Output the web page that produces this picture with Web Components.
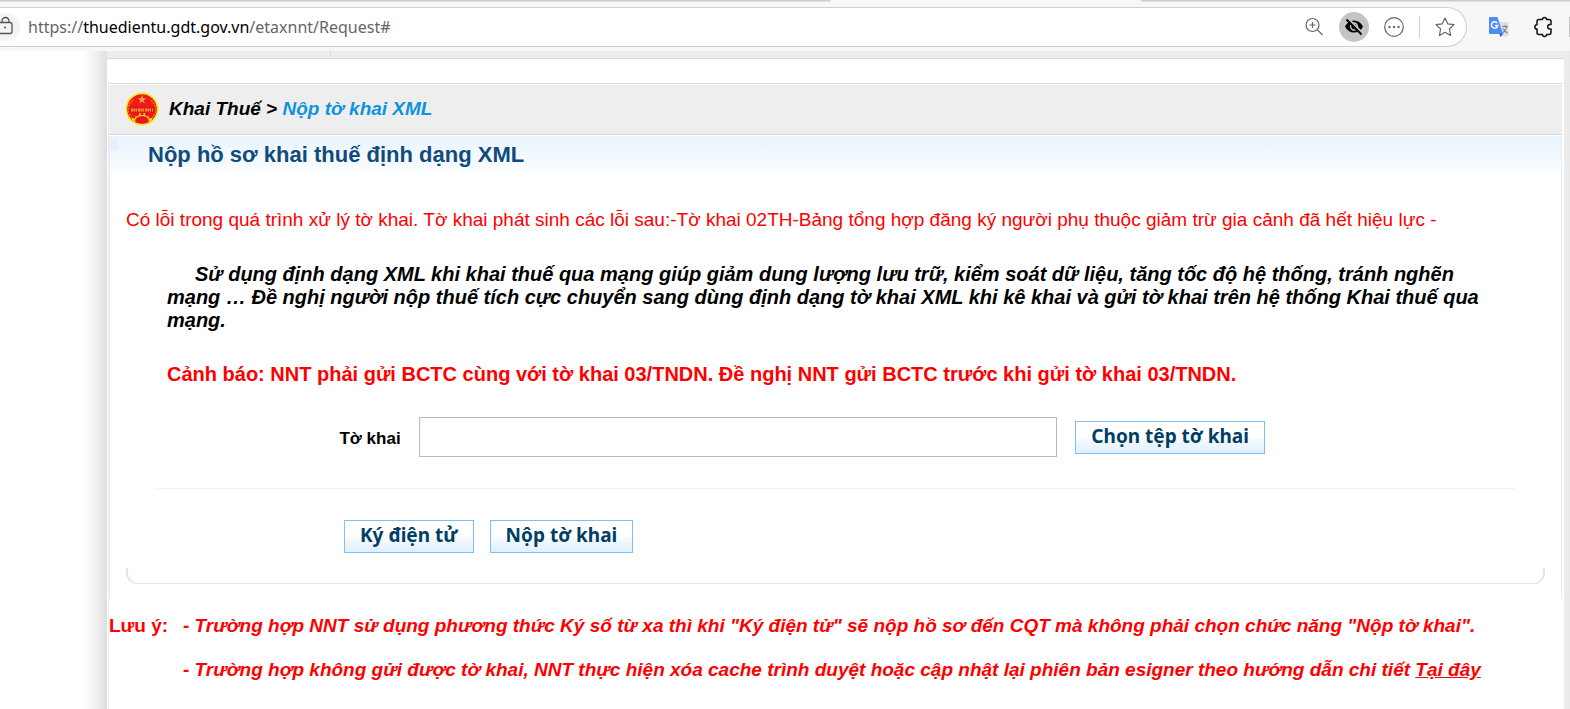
<!DOCTYPE html>
<html lang="vi">
<head>
<meta charset="utf-8">
<meta name="viewport" content="width=device-width, initial-scale=1">
<title>Nộp tờ khai XML</title>
<style>
  body {
    margin: 0;
    background: #fff;
    font-family: "Liberation Sans", Arial, sans-serif;
    color: #000;
  }
</style>
</head>
<body>
<etax-app></etax-app>

<script>
// Address bar
const toolbarTemplate = document.createElement('template');
toolbarTemplate.innerHTML = `
  <style>
    :host {
      display: flex;
      flex-direction: column;
      height: 51px;
      background: #f7f7f7;
      overflow: hidden;
    }

    .tabs {
      display: grid;
      grid-template-columns: 831fr 310fr 429fr;
      height: 7px;
    }

    .tabs i {
      height: 1px;
      background: #cbcbcb;
      border-bottom: 1px solid #e2e2e2;
    }

    .tabs i:first-child {
      border-bottom-right-radius: 4px;
    }

    .tabs i:last-child {
      grid-column: 3;
      border-bottom-left-radius: 4px;
    }

    .row {
      display: flex;
      align-items: center;
    }

    .bar {
      flex: 1;
      display: flex;
      align-items: center;
      box-sizing: border-box;
      height: 40px;
      padding-right: 1px;
      background: #fff;
      border: 1px solid #cfcfcf;
      border-left: 0;
      border-radius: 0 20px 20px 0;
    }

    .bar svg {
      flex: none;
    }

    .address {
      flex: 1;
      margin-left: 8px;
      font: 16px/26px "Noto Sans", "Open Sans", sans-serif;
      color: #666;
      text-decoration: none;
    }

    .address b {
      font-weight: normal;
      color: #000;
    }

    button {
      display: grid;
      place-items: center;
      width: 30px;
      height: 30px;
      margin: 0 5px;
      padding: 0;
      border: 0;
      border-radius: 50%;
      background: none;
    }

    button.on {
      background: #c4c4c4;
    }

    .divider {
      width: 1px;
      height: 22px;
      margin: 0 5px;
      background: #d0d0d0;
    }

    .extensions {
      display: flex;
      align-items: center;
      gap: 5px;
      margin-left: 12px;
    }

    .edge {
      width: 1px;
      height: 20px;
      background: #c4c4c4;
    }
  </style>
  <div class="tabs"><i></i><i></i></div>
  <div class="row">
    <div class="bar">
      <svg width="20" height="28" viewBox="0 0 20 28" fill="none" stroke="#555">
        <circle cx="6" cy="14" r="14" fill="#f3f3f3" stroke="none"/>
        <path d="M-3 9.500H10q2 0 2 2V18.500q0 2-2 2H-3M2 9.500V8a3.500 3.500 0 0 1 7 0v1.500" stroke-width="1.300"/>
        <circle cx="5" cy="14.500" r="1" fill="#555" stroke="none"/>
      </svg>
      <a class="address" href="#">https://<b>thuedientu.gdt.gov.vn</b>/etaxnnt/Request#</a>
      <button aria-label="Zoom">
        <svg width="20" height="20" viewBox="0 0 20 20" fill="none" stroke="#666" stroke-width="1.200">
          <circle cx="8.500" cy="8" r="6.500"/>
          <path d="M13.200 12.700L18.500 18M8.500 5v6M5.500 8h6"/>
        </svg>
      </button>
      <button class="on" aria-label="Tracking">
        <svg width="20" height="20" viewBox="0 0 20 20">
          <path d="M1 9.500C3 5.500 6.200 3.500 10 3.500s7 2 9 6c-2 4-5.200 6-9 6s-7-2-9-6z" fill="#000"/>
          <circle cx="10" cy="9.500" r="3.400" fill="none" stroke="#c4c4c4" stroke-width="1.500"/>
          <path d="M4 1.500L18.500 16" stroke="#c4c4c4" stroke-width="2"/>
          <path d="M2.500 2.500L17.500 17.500" stroke="#000" stroke-width="2"/>
        </svg>
      </button>
      <button aria-label="More">
        <svg width="20" height="20" viewBox="0 0 20 20" fill="#666">
          <circle cx="10" cy="10" r="9.300" fill="none" stroke="#666" stroke-width="1.200"/>
          <circle cx="5.500" cy="10" r="1.200"/><circle cx="10" cy="10" r="1.200"/><circle cx="14.500" cy="10" r="1.200"/>
        </svg>
      </button>
      <span class="divider"></span>
      <button aria-label="Favorite">
        <svg width="20" height="20" viewBox="0 0 20 20" fill="none" stroke="#666" stroke-width="1.200" stroke-linejoin="round">
          <path d="M10 1l2.700 5.800 6.300.8-4.600 4.400 1.200 6.500L10 15.300l-5.600 3.200L5.600 12 1 7.600l6.300-.8z"/>
        </svg>
      </button>
    </div>
    <div class="extensions">
      <button aria-label="Translate">
        <svg width="22" height="22" viewBox="0 0 22 22">
          <path d="M10 6h9.500q1 0 1 1v12.500q0 1-1 1H13z" fill="#dedede"/>
          <path d="M11 17h4.500L12.500 21z" fill="#3a49c0"/>
          <path d="M2 1h7.500l5.500 17H2q-1 0-1-1V2q0-1 1-1z" fill="#4d8bf5"/>
          <path d="M9.300 7.100A3.200 3.200 0 1 0 9.800 9.500H6.800" fill="none" stroke="#fff" stroke-width="1.400"/>
          <path d="M14 10.500h6M17 9v1.500M18.800 10.500Q18 14.500 14.500 17M15 12.500q1.500 3 4.500 4.500" fill="none" stroke="#6f8790" stroke-width="1.200"/>
        </svg>
      </button>
      <button aria-label="Extensions">
        <svg width="22" height="22" viewBox="0 0 22 22" fill="none" stroke="#111" stroke-width="1.500" stroke-linejoin="round">
          <path d="M6 3.500H9.500a2 2 0 0 1 4 0H16q2 0 2 2V8.500h-1a2.300 2.300 0 0 0 0 4.600h1V16.500q0 2-2 2h-2.500a2 2 0 0 1-4 0H6q-2 0-2-2V13a2.100 2.100 0 0 1 0-4.200V5.500q0-2 2-2z"/>
        </svg>
      </button>
      <span class="edge"></span>
    </div>
  </div>
`;

class BrowserToolbar extends HTMLElement {
  constructor() {
    super();
    this.attachShadow({ mode: 'open' });
    this.shadowRoot.appendChild(toolbarTemplate.content.cloneNode(true));
  }
}

// Breadcrumb row with the emblem
const crumbTemplate = document.createElement('template');
crumbTemplate.innerHTML = `
  <style>
    :host {
      display: flex;
      align-items: center;
      gap: 10px;
      height: 50px;
      padding-left: 16px;
      background: #eee;
      border: 1px solid #d9d9d9;
      border-width: 1px 0;
      box-shadow: inset 0 1px #fff;
      font: italic bold 19px/24px "Liberation Sans", Arial, sans-serif;
    }
  </style>
  <svg width="34" height="34" viewBox="0 0 34 34">
    <circle cx="17" cy="17" r="16.500" fill="#f5ee1d"/>
    <circle cx="17" cy="17" r="14.800" fill="#f01818"/>
    <path d="M8 8a12.500 12.500 0 0 0-1 18M26 8a12.500 12.500 0 0 1 1 18" fill="none" stroke="#e8801c" stroke-width="1.500" stroke-dasharray="2 1"/>
    <path d="M17 3l1.200 3.200h3.300l-2.700 2 1 3.200-2.800-2-2.800 2 1-3.200-2.700-2h3.300z" fill="#f59a3c"/>
    <path d="M4 14.500h26v7H4z" fill="#e81616"/>
    <path d="M6 18h22" stroke="#f2942c" stroke-width="3" stroke-dasharray="2 .5 1.500 .5 1.500 1"/>
    <path d="M7 28v-2l3 .5 .5-2.500 2 .5 1.500-1.500V21h1.500v2h3v-2H20v2l1.500 1.500 2-.5 .5 2.500 3-.5v2l-3 2H10z" fill="#f8d52b"/>
    <path d="M10 29.500a7 5.500 0 0 1 14 0l-7 2z" fill="#e81616"/>
  </svg>
  <span><slot></slot></span>
`;

class BreadcrumbBar extends HTMLElement {
  constructor() {
    super();
    this.attachShadow({ mode: 'open' });
    this.shadowRoot.appendChild(crumbTemplate.content.cloneNode(true));
  }
}

// Push button
const buttonTemplate = document.createElement('template');
buttonTemplate.innerHTML = `
  <style>
    :host {
      display: block;
    }

    button {
      display: block;
      height: 33px;
      padding: 0 15px 3px;
      border: 1px solid #7cc0f8;
      background: linear-gradient(#fff 50%, #f5faff 55%, #e0effc);
      color: #003e64;
      font: bold 19px/28px "Noto Sans", "Open Sans", sans-serif;
      white-space: nowrap;
      cursor: pointer;
    }
  </style>
  <button type="button"><slot></slot></button>
`;

class TaxButton extends HTMLElement {
  constructor() {
    super();
    this.attachShadow({ mode: 'open' });
    this.shadowRoot.appendChild(buttonTemplate.content.cloneNode(true));
  }
}

// Declaration form: file name, choose button, sign and submit
const formTemplate = document.createElement('template');
formTemplate.innerHTML = `
  <style>
    :host {
      display: block;
    }

    .file {
      display: grid;
      grid-template-columns: 18% 47% auto;
      align-items: center;
      justify-content: start;
      column-gap: 18px;
      margin: 0 30px;
      padding-bottom: 31px;
      border-bottom: 1px solid #f0f2f4;
    }

    label {
      padding-top: 4px;
      text-align: right;
      font-size: 17px;
      font-weight: bold;
      line-height: 20px;
    }

    input {
      box-sizing: border-box;
      width: 100%;
      height: 40px;
      margin: 0;
      border: 1px solid #bababa;
      font: 18px "Liberation Sans", Arial, sans-serif;
    }

    .actions {
      display: flex;
      gap: 16px;
      padding: 31px 30px 15px 218px;
    }

    .cap {
      height: 15px;
      border: 1px solid #d9e8f6;
      border-width: 0 2px 1px;
      border-radius: 0 0 11px 11px;
    }
  </style>
  <div class="file">
    <label for="file">Tờ khai</label>
    <input id="file" type="text">
    <tax-button>Chọn tệp tờ khai</tax-button>
  </div>
  <div class="actions">
    <tax-button>Ký điện tử</tax-button>
    <tax-button>Nộp tờ khai</tax-button>
  </div>
  <div class="cap"></div>
`;

class DeclarationForm extends HTMLElement {
  constructor() {
    super();
    this.attachShadow({ mode: 'open' });
    this.shadowRoot.appendChild(formTemplate.content.cloneNode(true));
  }
}

// Notes under the form
const notesTemplate = document.createElement('template');
notesTemplate.innerHTML = `
  <style>
    :host {
      display: grid;
      grid-template-columns: 74px 1fr;
      row-gap: 20px;
      padding: 15px 0 30px;
      color: #f00;
      font: bold 19px/24px "Liberation Sans", Arial, sans-serif;
    }

    p {
      grid-column: 2;
      margin: 0;
      font-style: italic;
    }

    a {
      color: inherit;
    }
  </style>
  <span>Lưu ý:</span>
  <p>- Trường hợp NNT sử dụng phương thức Ký số từ xa thì khi "Ký điện tử" sẽ nộp hồ sơ đến CQT mà không phải chọn chức năng "Nộp tờ khai".</p>
  <p>- Trường hợp không gửi được tờ khai, NNT thực hiện xóa cache trình duyệt hoặc cập nhật lại phiên bản esigner theo hướng dẫn chi tiết <a href="#">Tại đây</a></p>
`;

class TaxNotes extends HTMLElement {
  constructor() {
    super();
    this.attachShadow({ mode: 'open' });
    this.shadowRoot.appendChild(notesTemplate.content.cloneNode(true));
  }
}

// Whole page
const appTemplate = document.createElement('template');
appTemplate.innerHTML = `
  <style>
    :host {
      display: flex;
      flex-direction: column;
      min-height: 100vh;
    }

    .page {
      flex: 1;
      display: grid;
      grid-template-columns: 107px 1fr 6px;
    }

    .left {
      background: linear-gradient(to right, #fff 76%, #f3f3f3 88%, #dedede);
    }

    .right {
      background: #ebebeb;
    }

    .menu {
      display: flex;
      height: 7px;
      background: #ededed;
      border-bottom: 1px solid #d9d9d9;
    }

    .menu i {
      width: 223px;
      height: 5px;
      border-right: 1px solid #dcdcdc;
    }

    .content {
      margin: 24px 2px 0 1px;
      border-left: 1px solid #f0f0f0;
    }

    .crumb {
      color: #0f93dc;
    }

    .panel {
      border: 1px solid #e3eefa;
      border-width: 0 1px;
      margin-top: 1px;
      padding: 0 16px 15px;
      background:
        linear-gradient(#e6effd, #e6effd) 0 4px / 8px 10px no-repeat,
        linear-gradient(#e8f4ff, #fff) 0 0 / 100% 44px no-repeat;
    }

    h1 {
      margin: 0 0 36px;
      padding: 6px 22px 5px;
      color: #114a7c;
      font-size: 22px;
      line-height: 26px;
    }

    .error {
      margin: 0 0 32px;
      color: #f00;
      font-size: 19px;
      line-height: 22px;
    }

    .intro {
      margin: 0 46px 31px 41px;
      font-size: 20px;
      font-style: italic;
      font-weight: bold;
      line-height: 23px;
      text-indent: 28px;
    }

    .warning {
      margin: 0 41px 31px;
      color: #f00;
      font-size: 20px;
      font-weight: bold;
      line-height: 23px;
    }
  </style>
  <browser-toolbar></browser-toolbar>
  <div class="page">
    <div class="left"></div>
    <main>
      <div class="menu"><i></i></div>
      <div class="content">
        <breadcrumb-bar>Khai Thuế &gt; <span class="crumb">Nộp tờ khai XML</span></breadcrumb-bar>
        <div class="panel">
          <h1>Nộp hồ sơ khai thuế định dạng XML</h1>
          <p class="error">Có lỗi trong quá trình xử lý tờ khai. Tờ khai phát sinh các lỗi sau:-Tờ khai 02TH-Bảng tổng hợp đăng ký người phụ thuộc giảm trừ gia cảnh đã hết hiệu lực -</p>
          <p class="intro">Sử dụng định dạng XML khi khai thuế qua mạng giúp giảm dung lượng lưu trữ, kiểm soát dữ liệu, tăng tốc độ hệ thống, tránh nghẽn mạng … Đề nghị người nộp thuế tích cực chuyển sang dùng định dạng tờ khai XML khi kê khai và gửi tờ khai trên hệ thống Khai thuế qua mạng.</p>
          <p class="warning">Cảnh báo: NNT phải gửi BCTC cùng với tờ khai 03/TNDN. Đề nghị NNT gửi BCTC trước khi gửi tờ khai 03/TNDN.</p>
          <declaration-form></declaration-form>
        </div>
        <tax-notes></tax-notes>
      </div>
    </main>
    <div class="right"></div>
  </div>
`;

class EtaxApp extends HTMLElement {
  constructor() {
    super();
    this.attachShadow({ mode: 'open' });
    this.shadowRoot.appendChild(appTemplate.content.cloneNode(true));
  }
}

customElements.define('browser-toolbar', BrowserToolbar);
customElements.define('breadcrumb-bar', BreadcrumbBar);
customElements.define('tax-button', TaxButton);
customElements.define('declaration-form', DeclarationForm);
customElements.define('tax-notes', TaxNotes);
customElements.define('etax-app', EtaxApp);
</script>
</body>
</html>
